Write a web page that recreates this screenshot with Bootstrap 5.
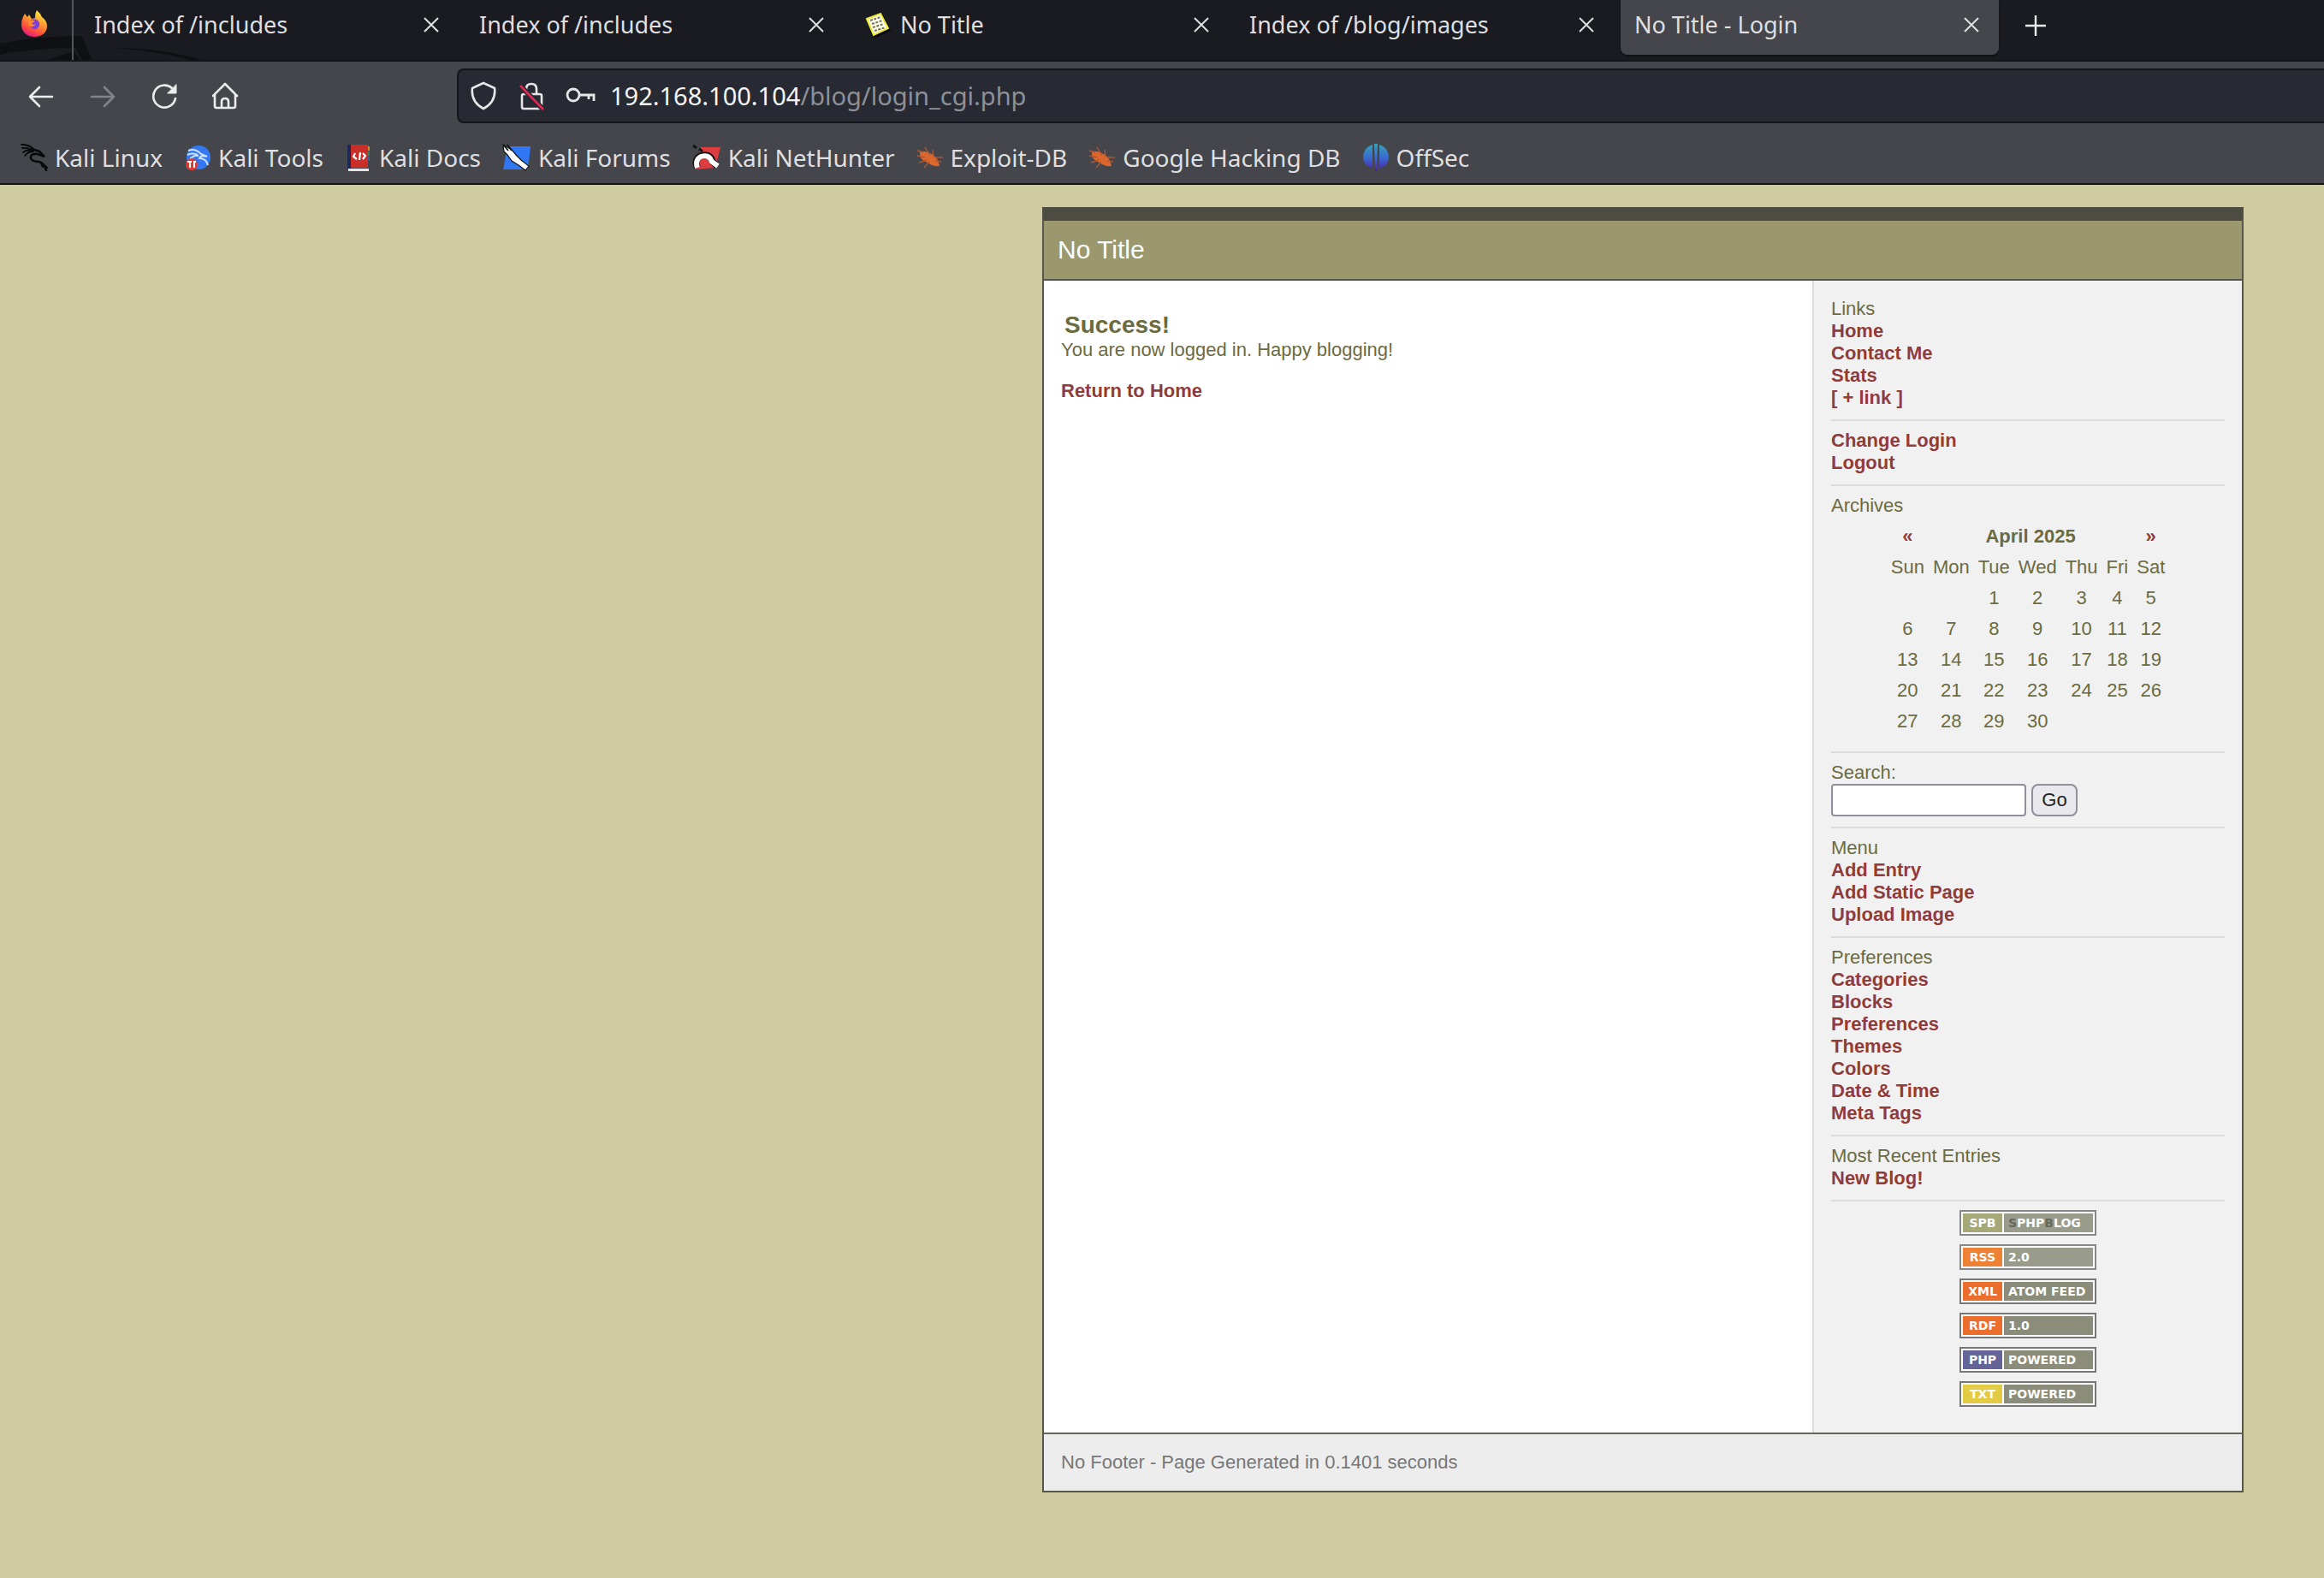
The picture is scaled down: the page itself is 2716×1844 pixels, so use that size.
<!DOCTYPE html>
<html lang="en">
<head>
<meta charset="utf-8">
<meta name="viewport" content="width=device-width, initial-scale=1">
<title>No Title - Login</title>
<link rel="stylesheet" href="https://cdn.jsdelivr.net/npm/bootstrap@5.3.0/dist/css/bootstrap.min.css">
<style>
  body { background: #cecba0; font-family: "Liberation Sans", Arial, sans-serif; font-size: 22px; line-height: 26px; color: #6b6b3f; }
  a { text-decoration: none; }
  svg { display: block; flex: none; }

  /* browser chrome */
  .browser { font-family: "Noto Sans", sans-serif; font-size: 27px; line-height: 36px; color: #dfdfe0; border-bottom: 2px solid #14151c; background: #45464b; white-space: nowrap; overflow: hidden; }
  .browser button { background: none; border: 0; padding: 0; color: inherit; }
  .tabstrip { height: 72px; background: #1a1b20; border-bottom: 2px solid #131418; }
  .wallpaper { left: 0; bottom: 0; }
  .pinned { width: 86px; padding-left: 24px; padding-top: 12px; border-right: 2px solid #55565a; }
  .tabs { padding-left: 8px; gap: 8px; }
  .tab { width: 442px; height: 64px; padding: 0 22px 6px 16px; border-radius: 0 0 8px 8px; }
  .tab.current { background: #45464b; box-shadow: 0 2px 2px #101114; }
  .tab a { color: inherit; gap: 10px; }
  .browser .new-tab { padding: 0 30px 4px; height: 64px; }
  .toolbar { height: 80px; padding: 8px 0 8px 32px; }
  .nav-buttons { width: 502px; gap: 40px; }
  .urlbar { height: 64px; background: #272a33; border: 2px solid #15161b; border-right: 0; border-radius: 8px 0 0 8px; padding-left: 13px; gap: 24px; }
  .urlbar a { font-size: 29px; color: #8f9095; margin-left: -8px; }
  .urlbar span { color: #f5f5f6; }
  .bookmarks { height: 62px; padding: 2px 24px 0; gap: 25px; font-size: 28px; }
  .bookmarks a { color: inherit; gap: 8px; }

  /* blog */
  .blog { width: 1404px; max-width: 100%; margin: 26px 94px 100px auto; border: 2px solid #56564c; border-top: 16px solid #4c4c43; }
  .blog a { color: #913b3a; font-weight: bold; }
  .masthead { background: #9a986c; color: #fff; font-size: 30px; line-height: 68px; padding-left: 16px; border-bottom: 2px solid #56564c; }
  .entry { background: #fff; padding: 36px 20px; }
  .entry h1 { font-size: 28px; line-height: 32px; font-weight: bold; padding-left: 4px; margin: 0; }
  .entry p { margin: 0 0 22px; }
  .side { width: 502px; flex: none; background: #f1f1f1; border-left: 2px solid #dcdcdc; padding: 20px 20px 30px; }
  .block { padding-bottom: 12px; border-bottom: 2px solid #dbdbdb; margin-bottom: 10px; }
  .block a, .block h2 { display: block; }
  .block h2 { font-size: 22px; line-height: 26px; font-weight: normal; margin: 0; }
  .calendar { margin: 5px auto; text-align: center; }
  .calendar th, .calendar td { padding: 5px; height: 36px; }
  .calendar thead tr + tr th { font-weight: normal; }
  .search-row { gap: 6px; }
  .search-box { width: 228px; height: 38px; border: 2px solid #8f8f9d; border-radius: 4px; background: #fff; padding: 0 4px; }
  .go-button { width: 54px; height: 38px; border: 2px solid #8f8f9d; border-radius: 8px; background: #e9e9ed; color: #222; padding: 0; }
  .chips { gap: 10px; }
  .chip { width: 160px; height: 30px; border: 2px solid #777; background: #fff; padding: 2px; gap: 2px; font: bold 14px/22px "DejaVu Sans", sans-serif; }
  .blog .chip { color: #fff; }
  .chip span { height: 22px; }
  .chip span:first-child { width: 46px; text-align: center; }
  .chip span:last-child { width: 104px; padding-left: 5px; background: #8b8d7a; }
  .chip.pale { border-color: #888; }
  .chip.pale span:last-child { background: #9a9c8b; }
  .chip i { font-style: normal; color: #66685c; }
  .c-spb { background: #a6a878; } .c-rss { background: #ee8133; } .c-xml { background: #ec6e2c; } .c-php { background: #646499; } .c-txt { background: #e3cb44; }
  .foot { background: #ededed; color: #777; border-top: 2px solid #64665a; padding: 20px; }
</style>
</head>
<body>
<header class="browser">
  <div class="tabstrip d-flex position-relative">
    <svg class="wallpaper position-absolute" width="260" height="28" viewBox="0 0 260 28"><path d="M0 9Q45 0 95 0L108 28H96L88 14Q40 14 0 22Z" fill="#0f1013"/><path d="M55 28Q75 22 86 18L93 28ZM135 14Q190 14 235 28H222Q185 18 135 14Z" fill="#0f1013"/></svg>
    <a class="pinned position-relative" href="#" aria-label="Firefox">
      <svg width="32" height="32" viewBox="0 0 32 32"><defs><linearGradient id="fx" x1=".8" y1="0" x2=".3" y2="1"><stop offset="0" stop-color="#fff44f"/><stop offset=".4" stop-color="#ffa12e"/><stop offset=".75" stop-color="#ff4b3e"/><stop offset="1" stop-color="#e31587"/></linearGradient></defs><path d="M19 0Q23 3 25 8Q31 12 31 19Q30 30 17 31Q3 31 1 18Q1 10 5 4L8 8L10 5L13 10L17 9Q17 3 19 0Z" fill="url(#fx)"/><path d="M10 13Q14 9 19 11Q23 14 22 18Q20 23 15 22Q10 20 10 13Z" fill="#7a3fe0"/><path d="M9 13Q14 10 17 13L13 15Q14 18 18 16Q15 21 10 18Z" fill="#ff8a2a"/></svg>
    </a>
    <nav class="tabs d-flex" aria-label="Tabs">
      <div class="tab d-flex align-items-center justify-content-between"><a class="d-flex" href="#">Index of /includes</a><button aria-label="Close tab"><svg width="20" height="20" viewBox="0 0 20 20"><path d="M2 2L18 18M18 2L2 18" stroke="#dfdfe0" stroke-width="2"/></svg></button></div>
      <div class="tab d-flex align-items-center justify-content-between"><a class="d-flex" href="#">Index of /includes</a><button aria-label="Close tab"><svg width="20" height="20" viewBox="0 0 20 20"><path d="M2 2L18 18M18 2L2 18" stroke="#dfdfe0" stroke-width="2"/></svg></button></div>
      <div class="tab d-flex align-items-center justify-content-between"><a class="d-flex align-items-center" href="#"><svg width="32" height="32" viewBox="0 0 32 32"><path d="M6 12L22 6L31 23L13 31Z" fill="#050505"/><path d="M3 9L19 3L28 20L11 28Z" fill="#fffef0" stroke="#eeea30" stroke-width="2"/><path d="M7 11L19 7M9 15L21 11M10 19L23 15M12 23L25 19" stroke="#777450" stroke-width="2" stroke-dasharray="3 1.5"/></svg>No Title</a><button aria-label="Close tab"><svg width="20" height="20" viewBox="0 0 20 20"><path d="M2 2L18 18M18 2L2 18" stroke="#dfdfe0" stroke-width="2"/></svg></button></div>
      <div class="tab d-flex align-items-center justify-content-between"><a class="d-flex" href="#">Index of /blog/images</a><button aria-label="Close tab"><svg width="20" height="20" viewBox="0 0 20 20"><path d="M2 2L18 18M18 2L2 18" stroke="#dfdfe0" stroke-width="2"/></svg></button></div>
      <div class="tab current d-flex align-items-center justify-content-between"><a class="d-flex" href="#">No Title - Login</a><button aria-label="Close tab"><svg width="20" height="20" viewBox="0 0 20 20"><path d="M2 2L18 18M18 2L2 18" stroke="#dfdfe0" stroke-width="2"/></svg></button></div>
    </nav>
    <button class="new-tab" aria-label="New tab"><svg width="26" height="26" viewBox="0 0 26 26"><path d="M13 1V25M1 13H25" stroke="#e8e8e9" stroke-width="2.4"/></svg></button>
  </div>

  <div class="toolbar d-flex">
    <div class="nav-buttons d-flex align-items-center">
      <button aria-label="Back"><svg width="32" height="32" viewBox="0 0 32 32" fill="none" stroke="#ececed" stroke-width="2.6" stroke-linecap="round" stroke-linejoin="round"><path d="M29 17H3M14 6L3 17L14 28"/></svg></button>
      <button aria-label="Forward"><svg width="32" height="32" viewBox="0 0 32 32" fill="none" stroke="#838488" stroke-width="2.6" stroke-linecap="round" stroke-linejoin="round"><path d="M3 17H29M18 6L29 17L18 28"/></svg></button>
      <button aria-label="Reload"><svg width="32" height="32" viewBox="0 0 32 32" fill="none" stroke="#ececed" stroke-width="2.6" stroke-linecap="round"><path d="M25 7A13 13 0 1 0 29 19"/><path d="M30 3V13H20Z" fill="#ececed" stroke-width="1"/></svg></button>
      <button aria-label="Home"><svg width="32" height="32" viewBox="0 0 32 32" fill="none" stroke="#ececed" stroke-width="2.6" stroke-linecap="round" stroke-linejoin="round"><path d="M1 16L15 2L29 16M3 14V28Q3 30 5 30H25Q27 30 27 28V14M11 30V23Q11 19 15 19Q19 19 19 23V30"/></svg></button>
    </div>
    <div class="urlbar d-flex align-items-center flex-grow-1">
      <svg width="32" height="36" viewBox="0 0 32 36"><path d="M16 3L29 9Q31 25 16 33Q1 25 3 9Z" fill="none" stroke="#e6e6e7" stroke-width="2.6" stroke-linejoin="round"/></svg>
      <svg width="32" height="36" viewBox="0 0 32 36" fill="none" stroke="#e6e6e7" stroke-width="2.6"><path d="M10 16V10Q10 4 16 4Q22 4 22 10V16M7 16H26Q28 16 28 18V31Q28 33 26 33H7Q5 33 5 31V18Q5 16 7 16"/><path d="M3 6L30 34" stroke="#272a33" stroke-width="6"/><path d="M3 6L30 34" stroke="#e22850"/></svg>
      <svg width="36" height="36" viewBox="0 0 36 36" fill="none" stroke="#e6e6e7" stroke-width="2.8"><circle cx="9" cy="17" r="7"/><path d="M16 17H33V24M27 17V22"/></svg>
      <a href="#"><span>192.168.100.104</span>/blog/login_cgi.php</a>
    </div>
  </div>

  <nav class="bookmarks d-flex align-items-center" aria-label="Bookmarks">
    <a class="d-flex align-items-center" href="#"><svg width="32" height="32" viewBox="0 0 32 32" fill="none" stroke="#08090a" stroke-linecap="round"><path d="M1 1Q10 1 15 6M2 5Q9 4 14 8M3 10Q8 6 14 9M5 14Q9 9 15 9" stroke-width="1.8"/><path d="M13 6L22 9L28 15L20 12Q11 11 12 17Q14 21 22 21Q28 23 30 31" stroke-width="2.6"/><path d="M24 23L26 27M29 26L31 28" stroke-width="2"/></svg>Kali Linux</a>
    <a class="d-flex align-items-center" href="#"><svg width="32" height="32" viewBox="0 0 32 32"><circle cx="17" cy="16" r="14" fill="#3478f2"/><path d="M5 8Q13 5 20 12L27 15Q19 13 18 17Q26 17 28 25M4 13Q10 10 16 13M7 18Q11 13 17 14" stroke="#cfe2ff" stroke-width="2" fill="none"/><circle cx="9" cy="24" r="7" fill="#dc3c36"/><path d="M4 21H9M7 21V28M11 21H14M12 22V28" stroke="#fff" stroke-width="2"/></svg>Kali Tools</a>
    <a class="d-flex align-items-center" href="#"><svg width="32" height="32" viewBox="0 0 32 32"><path d="M3 1H8V29H3Z" fill="#1d2950"/><path d="M7 1H27V28H7Z" fill="#c92f28"/><path d="M27 3H29V8H27Z" fill="#d88b25"/><path d="M27 9H29V14H27Z" fill="#2a8b55"/><path d="M27 15H29V20H27Z" fill="#3760b0"/><path d="M4 29H28V32H4Z" fill="#e8e4e4"/><path d="M12 11L10 15L14 18M21 11L24 14L21 18M18 10L17 19" stroke="#fff" stroke-width="2.2" fill="none"/></svg>Kali Docs</a>
    <a class="d-flex align-items-center" href="#"><svg width="34" height="32" viewBox="0 0 34 32"><path d="M6 3H33L30 30H1Z" fill="#2f77f3"/><path d="M1 1L11 7L17 14L22 19L31 26L27 31L19 25L11 20L6 13L2 9Z" fill="#fff" stroke="#111" stroke-width="1.2"/><path d="M2 2L7 8M6 1L11 8" stroke="#111" stroke-width="1.8"/></svg>Kali Forums</a>
    <a class="d-flex align-items-center" href="#"><svg width="34" height="32" viewBox="0 0 34 32"><path d="M10 4H33L27 28L3 30Z" fill="#dd3d40"/><path d="M6 28Q2 18 10 14Q21 11 24 21L29 26" stroke="#1a1216" stroke-width="8" fill="none"/><path d="M6 28Q3 19 10 15Q20 12 23 21L30 26" stroke="#fff" stroke-width="6" fill="none"/><path d="M1 2L5 5M8 6L12 9" stroke="#151515" stroke-width="3"/></svg>Kali NetHunter</a>
    <a class="d-flex align-items-center" href="#"><svg width="32" height="32" viewBox="0 0 32 32"><path d="M4 9Q9 8 13 10L18 12Q25 16 27 26Q19 27 13 22Q3 19 4 9Z" fill="#db672d"/><path d="M10 4Q12 8 16 13M19 7L20 15M31 16H22M1 14L10 16M3 22L12 19M9 28L15 21M29 21L22 20M1 8L8 10" stroke="#a9583a" stroke-width="1.4" fill="none"/></svg>Exploit-DB</a>
    <a class="d-flex align-items-center" href="#"><svg width="32" height="32" viewBox="0 0 32 32"><path d="M4 9Q9 8 13 10L18 12Q25 16 27 26Q19 27 13 22Q3 19 4 9Z" fill="#db672d"/><path d="M10 4Q12 8 16 13M19 7L20 15M31 16H22M1 14L10 16M3 22L12 19M9 28L15 21M29 21L22 20M1 8L8 10" stroke="#a9583a" stroke-width="1.4" fill="none"/></svg>Google Hacking DB</a>
    <a class="d-flex align-items-center" href="#"><svg width="32" height="32" viewBox="0 0 32 32"><defs><linearGradient id="os" x1="0" y1="0" x2="0" y2="1"><stop offset="0" stop-color="#35a3b8"/><stop offset=".5" stop-color="#3a6bd0"/><stop offset="1" stop-color="#4c1fa8"/></linearGradient></defs><path d="M12 1V29Q1 25 1 15Q2 4 12 1ZM20 1V29Q31 25 31 15Q30 4 20 1ZM14 0H18L17 32H15Z" fill="url(#os)"/></svg>OffSec</a>
  </nav>
</header>

<div class="blog">
  <div class="masthead">No Title</div>
  <div class="d-flex">
    <main class="entry flex-grow-1">
      <h1>Success!</h1>
      <p>You are now logged in. Happy blogging!</p>
      <a href="#">Return to Home</a>
    </main>
    <aside class="side">
      <section class="block"><h2>Links</h2><a href="#">Home</a><a href="#">Contact Me</a><a href="#">Stats</a><a href="#">[ + link ]</a></section>
      <section class="block"><a href="#">Change Login</a><a href="#">Logout</a></section>
      <section class="block"><h2>Archives</h2>
        <table class="calendar">
          <thead>
            <tr><th><a href="#" aria-label="Previous month">«</a></th><th colspan="5">April 2025</th><th><a href="#" aria-label="Next month">»</a></th></tr>
            <tr><th>Sun</th><th>Mon</th><th>Tue</th><th>Wed</th><th>Thu</th><th>Fri</th><th>Sat</th></tr>
          </thead>
          <tbody>
            <tr><td></td><td></td><td>1</td><td>2</td><td>3</td><td>4</td><td>5</td></tr>
            <tr><td>6</td><td>7</td><td>8</td><td>9</td><td>10</td><td>11</td><td>12</td></tr>
            <tr><td>13</td><td>14</td><td>15</td><td>16</td><td>17</td><td>18</td><td>19</td></tr>
            <tr><td>20</td><td>21</td><td>22</td><td>23</td><td>24</td><td>25</td><td>26</td></tr>
            <tr><td>27</td><td>28</td><td>29</td><td>30</td><td></td><td></td><td></td></tr>
          </tbody>
        </table>
      </section>
      <section class="block">
        <form><label class="d-block" for="q">Search:</label><div class="search-row d-flex"><input class="search-box" id="q" type="text"><button class="go-button" type="button">Go</button></div></form>
      </section>
      <section class="block"><h2>Menu</h2><a href="#">Add Entry</a><a href="#">Add Static Page</a><a href="#">Upload Image</a></section>
      <section class="block"><h2>Preferences</h2><a href="#">Categories</a><a href="#">Blocks</a><a href="#">Preferences</a><a href="#">Themes</a><a href="#">Colors</a><a href="#">Date &amp; Time</a><a href="#">Meta Tags</a></section>
      <section class="block"><h2>Most Recent Entries</h2><a href="#">New Blog!</a></section>
      <div class="chips d-flex flex-column align-items-center">
        <a class="chip pale d-flex" href="#"><span class="c-spb">SPB</span><span><i>S</i>PHP<i>B</i>LOG</span></a>
        <a class="chip pale d-flex" href="#"><span class="c-rss">RSS</span><span>2.0</span></a>
        <a class="chip d-flex" href="#"><span class="c-xml">XML</span><span>ATOM FEED</span></a>
        <a class="chip d-flex" href="#"><span class="c-xml">RDF</span><span>1.0</span></a>
        <a class="chip d-flex" href="#"><span class="c-php">PHP</span><span>POWERED</span></a>
        <a class="chip d-flex" href="#"><span class="c-txt">TXT</span><span>POWERED</span></a>
      </div>
    </aside>
  </div>
  <footer class="foot">No Footer - Page Generated in 0.1401 seconds</footer>
</div>
<script src="https://cdn.jsdelivr.net/npm/bootstrap@5.3.0/dist/js/bootstrap.bundle.min.js"></script>
</body>
</html>
